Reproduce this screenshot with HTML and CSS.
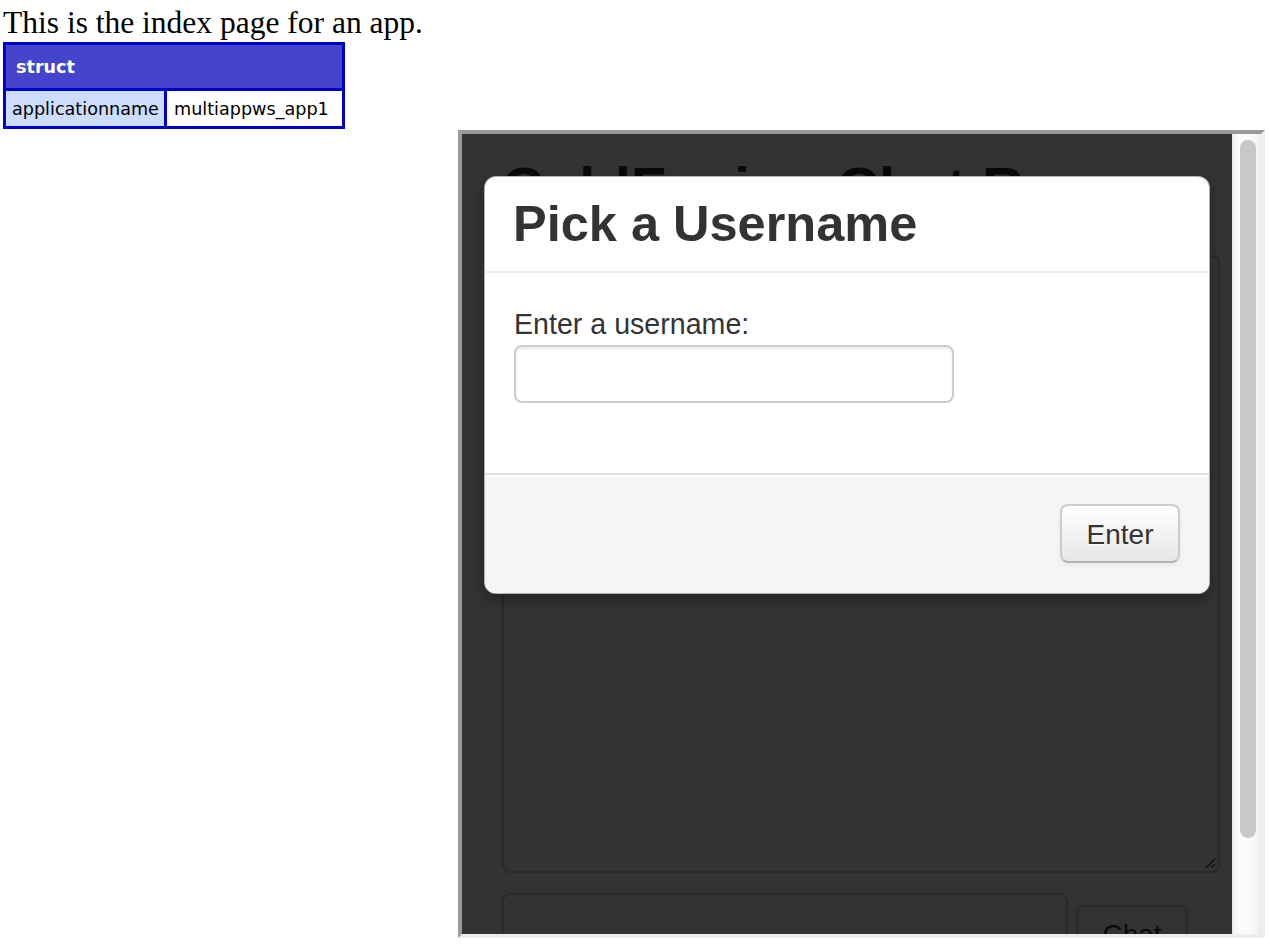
FILE: index.html
```html
<!DOCTYPE html>
<html>
<head>
<meta charset="utf-8">
<title>Index</title>
<link rel="stylesheet" href="styles.css">
</head>
<body>
<div class="intro">This is the index page for an app.</div>
<table class="dump">
  <tr><th class="dump-head" colspan="2">struct</th></tr>
  <tr><td class="dump-key">applicationname</td><td class="dump-val">multiappws_app1</td></tr>
</table>
<div class="frame">
  <div class="viewport">
    <div class="chat-page">
      <h1 class="chat-title">ColdFusion Chat Room</h1>
      <div class="chat-log">
        <svg class="grip" width="14" height="14" viewBox="0 0 14 14"><path d="M13 4 L4 13 M13 9 L9 13" stroke="#555" stroke-width="1.6" fill="none"/></svg>
      </div>
      <div class="chat-row">
        <div class="chat-input"></div>
        <div class="chat-btn">Chat</div>
      </div>
    </div>
    <div class="backdrop"></div>
    <div class="modal">
      <div class="modal-header">Pick a Username</div>
      <div class="modal-body">
        <div class="field-label">Enter a username:</div>
        <div class="field-input"></div>
      </div>
      <div class="modal-footer">
        <div class="btn">Enter</div>
      </div>
    </div>
  </div>
  <div class="scrollbar"><div class="thumb"></div></div>
</div>
</body>
</html>
```
FILE: styles.css
```css
html, body {
  margin: 0;
  padding: 0;
  background: #fff;
}
body {
  padding: 0 3px;
  font-family: "Liberation Serif", serif;
  color: #000;
}
.intro {
  font-size: 31.5px;
  line-height: 36px;
  padding-top: 5px;
  height: 37px;
}
.dump {
  border-collapse: separate;
  border-spacing: 3px;
  background: #0000cc;
  font-family: "DejaVu Sans", Verdana, sans-serif;
  font-size: 17.6px;
}
.dump th, .dump td {
  padding: 0;
  text-align: left;
}
.dump-head {
  background: #4444cc;
  color: #fff;
  font-weight: bold;
  height: 43px;
  padding-left: 10px !important;
}
.dump-key {
  background: #ccddff;
  color: #000;
  height: 35px;
  width: 158px;
  padding-left: 6px !important;
  box-sizing: border-box;
}
.dump-val {
  background: #fff;
  color: #000;
  width: 175px;
  padding-left: 7px !important;
  box-sizing: border-box;
}
.frame {
  margin: 1px 0 0 455px;
  width: 807px;
  height: 808px;
  box-sizing: border-box;
  border: 4px solid;
  border-color: #9a9a9a #eeeeee #eeeeee #9a9a9a;
  display: flex;
}
.viewport {
  flex: 1;
  position: relative;
  overflow: hidden;
  background: #fff;
  font-family: "Liberation Sans", Arial, sans-serif;
  color: #333;
}
.chat-page {
  padding: 14px 12px 0 40px;
}
.chat-title {
  margin: 0 0 27px 0;
  font-size: 58px;
  line-height: 80px;
  font-weight: bold;
  color: #333;
  white-space: nowrap;
}
.chat-log {
  position: relative;
  width: 718px;
  height: 618px;
  box-sizing: border-box;
  border: 2px solid #ccc;
  border-radius: 8px;
  margin-bottom: 20px;
}
.grip {
  position: absolute;
  right: 2px;
  bottom: 2px;
}
.chat-row {
  display: flex;
  align-items: center;
  gap: 8px;
}
.chat-input {
  width: 566px;
  height: 84px;
  box-sizing: border-box;
  border: 2px solid #ccc;
  border-radius: 8px;
}
.chat-btn {
  width: 112px;
  height: 60px;
  box-sizing: border-box;
  border: 2px solid #ccc;
  border-radius: 8px;
  font-size: 28px;
  line-height: 56px;
  text-align: center;
  color: #333;
}
.backdrop {
  position: absolute;
  inset: 0;
  background: rgba(0, 0, 0, 0.8);
}
.modal {
  position: absolute;
  left: 22px;
  top: 42px;
  width: 726px;
  box-sizing: border-box;
  background: #fff;
  border: 1px solid rgba(0, 0, 0, 0.3);
  border-radius: 12px;
  box-shadow: 0 6px 14px rgba(0, 0, 0, 0.3);
  overflow: hidden;
}
.modal-header {
  padding: 17px 28px;
  font-size: 50.5px;
  line-height: 60px;
  font-weight: bold;
  color: #333;
  border-bottom: 2px solid #eee;
}
.modal-body {
  padding: 30px 29px 30px 29px;
}
.field-label {
  font-size: 28.6px;
  line-height: 42px;
  margin-bottom: 0;
  color: #333;
}
.field-input {
  width: 440px;
  height: 58px;
  box-sizing: border-box;
  border: 2px solid #ccc;
  border-radius: 8px;
  box-shadow: inset 0 2px 2px rgba(0, 0, 0, 0.075);
  background: #fff;
  margin-bottom: 40px;
}
.modal-footer {
  background: #f5f5f5;
  border-top: 2px solid #ddd;
  box-shadow: inset 0 2px 0 #fff;
  padding: 29px 29px 30px;
  display: flex;
  justify-content: flex-end;
}
.btn {
  width: 120px;
  height: 59px;
  box-sizing: border-box;
  border: 2px solid #ccc;
  border-bottom-color: #b3b3b3;
  border-radius: 8px;
  background: linear-gradient(#ffffff, #e6e6e6);
  box-shadow: inset 0 2px 0 rgba(255, 255, 255, 0.2), 0 2px 4px rgba(0, 0, 0, 0.05);
  font-size: 28px;
  line-height: 57px;
  text-align: center;
  color: #333;
  text-shadow: 0 1px 1px rgba(255, 255, 255, 0.75);
}
.scrollbar {
  width: 29px;
  box-sizing: border-box;
  border-left: 1px solid #e6e6e6;
  background: linear-gradient(90deg, #f3f3f3, #fdfdfd 25%, #f8f8f8 75%, #ececec);
  padding: 6px 0 0 7px;
}
.thumb {
  width: 16px;
  height: 698px;
  border-radius: 8px;
  background: #c8c8c8;
}
```
